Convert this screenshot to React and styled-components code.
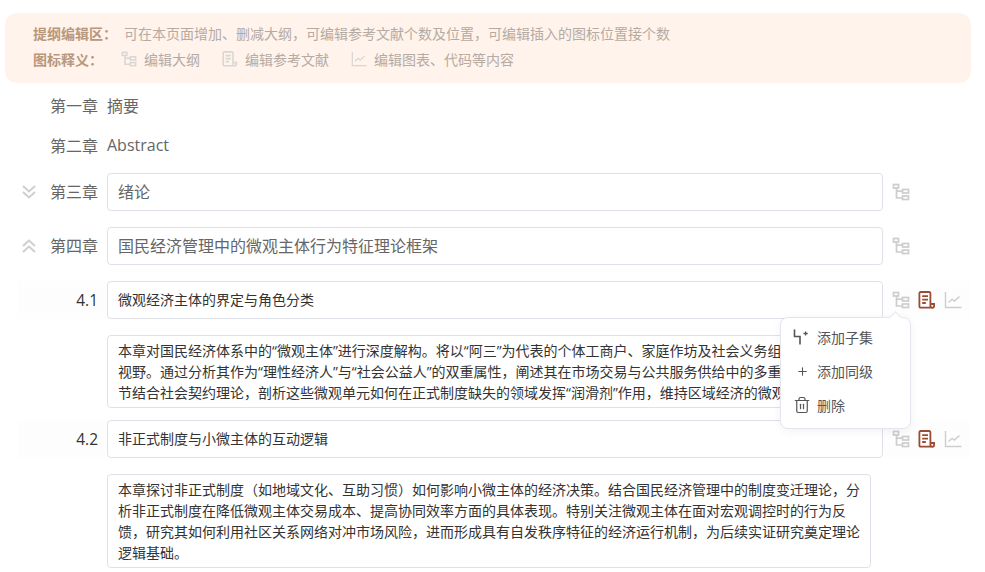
import styled, { createGlobalStyle } from "styled-components";
import { Plus, Trash2 } from "lucide-react";

const GlobalStyle = createGlobalStyle`
  html, body {
    margin: 0;
    padding: 0;
    background: #fff;
    overflow: hidden;
  }
  * {
    box-sizing: border-box;
  }
  body {
    font-family: "Open Sans", "Noto Sans CJK SC", sans-serif;
  }
`;

const TreeIcon = ({ size = 18 }) => (
  <svg width={size} height={size} viewBox="0 0 18 18" fill="none" stroke="currentColor" strokeWidth="1.7">
    <rect x="1.5" y="1.5" width="5" height="3.5" />
    <rect x="10.5" y="6.5" width="6" height="3.5" />
    <rect x="10.5" y="13" width="6" height="3.5" />
    <path d="M4.5 5v10h6M4.5 8.2h6" />
  </svg>
);

const DocIcon = ({ size = 18 }) => (
  <svg width={size} height={size} viewBox="0 0 18 18" fill="none" stroke="currentColor" strokeWidth="1.8">
    <path d="M13 16.6H2.6a1.2 1.2 0 0 1-1.2-1.2V2.2A1.2 1.2 0 0 1 2.6 1h8.6a1.2 1.2 0 0 1 1.2 1.2v12.6a1.8 1.8 0 0 0 3.7.2v-2h-3.7" />
    <path d="M4.2 5.2h5.8M4.2 8.6h5.8M4.2 12h3.6" />
  </svg>
);

const ChartIcon = ({ size = 18 }) => (
  <svg width={size} height={size} viewBox="0 0 18 18" fill="none" stroke="currentColor" strokeWidth="1.4">
    <path d="M1.5 1v15.5h16" />
    <path d="M4.5 11.5l3.5-3.2 2.5 1.8 5-4.6" />
  </svg>
);

const SubsetIcon = () => (
  <svg width="18" height="18" viewBox="0 0 18 18" fill="none" stroke="currentColor" strokeWidth="1.6">
    <path d="M1.5 1.5v7h5.5v8" />
    <path d="M12.6 3.4v4.2M10.5 5.5h4.2" strokeWidth="1.3" />
  </svg>
);

const FoldIcon = ({ up }) => (
  <svg width="16" height="16" viewBox="0 0 16 16" fill="none" stroke="currentColor" strokeWidth="2">
    {up ? (
      <path d="M2 8l6-5.5L14 8M2 14l6-5.5L14 14" />
    ) : (
      <path d="M2 2l6 5.5L14 2M2 8l6 5.5L14 8" />
    )}
  </svg>
);

const Notice = styled.div`
  margin: 13px 0 0 5px;
  width: 966px;
  height: 70px;
  padding: 7px 28px;
  background: #fff3ec;
  border-radius: 12px;
`;

const NoticeLine = styled.div`
  display: flex;
  align-items: center;
  height: 26px;
  font-size: 14px;
  color: #b5aba3;
`;

const NoticeTitle = styled.span`
  font-weight: 700;
  color: #b9977c;
  width: ${(p) => p.$width}px;
  flex: none;
`;

const Legend = styled.span`
  display: inline-flex;
  align-items: center;
  gap: 7px;
  margin-right: 22px;

  svg {
    color: #d9d6d3;
  }
`;

const Outline = styled.div`
  display: flex;
  flex-direction: column;
`;

const Row = styled.div`
  display: flex;
  align-items: center;
  height: 38px;
  margin-top: ${(p) => p.$top || 0}px;
`;

const Fold = styled.div`
  width: 50px;
  flex: none;
  padding-left: 21px;
  color: #cfcfcf;
  display: flex;
`;

const ChapterNo = styled.div`
  width: 57px;
  flex: none;
  padding-bottom: 2px;
  font-size: 16px;
  color: #666;
`;

const SectionNo = styled.div`
  width: 90px;
  margin-left: 17px;
  height: 100%;
  flex: none;
  display: flex;
  align-items: center;
  justify-content: flex-end;
  padding: 0 9px 1px 0;
  font-size: 15.5px;
  color: #333;
  background: repeating-conic-gradient(#fcfcfc 0 25%, #fff 0 50%) 0 0 / 2px 2px;
`;

const PlainTitle = styled.div`
  font-size: 16px;
  padding-bottom: 2px;
  color: #666;
`;

const TitleBox = styled.div`
  width: 776px;
  height: 100%;
  flex: none;
  display: flex;
  align-items: center;
  padding: 0 10px 2px;
  border: 1px solid #dfe1e8;
  border-radius: 4px;
  background: #fff;
  font-size: ${(p) => (p.$small ? 14 : 16)}px;
  color: ${(p) => (p.$small ? "#333" : "#666")};
`;

const Actions = styled.div`
  display: flex;
  align-items: center;
  gap: 8px;
  height: 100%;
  width: 86px;
  margin-left: 1px;
  padding-left: 8px;
  background: ${(p) =>
    p.$hover
      ? "repeating-conic-gradient(#fcfcfc 0 25%, #fff 0 50%) 0 0 / 2px 2px"
      : "transparent"};
`;

const Action = styled.span`
  display: flex;
  color: ${(p) => (p.$active ? "#9c4a33" : "#cdcdcd")};
`;

const Summary = styled.div`
  width: 764px;
  margin: ${(p) => p.$top}px 0 0 107px;
  padding: 4px 10px;
  border: 1px solid #dfe1e8;
  border-radius: 4px;
  font-size: 14px;
  line-height: 21px;
  color: #333;
  white-space: pre-line;
`;

const Menu = styled.div`
  position: absolute;
  left: 780px;
  top: 317px;
  width: 131px;
  height: 112px;
  padding: 4px 0;
  background: #fff;
  border: 1px solid #e4e6ee;
  border-radius: 8px;
  box-shadow: 0 2px 10px rgba(0, 0, 0, 0.06);

  &::before {
    content: "";
    position: absolute;
    top: -5px;
    left: 110px;
    width: 8px;
    height: 8px;
    background: #fff;
    border-left: 1px solid #e4e6ee;
    border-top: 1px solid #e4e6ee;
    transform: rotate(45deg);
  }
`;

const MenuItem = styled.div`
  display: flex;
  align-items: center;
  gap: 6px;
  height: 34px;
  padding: 0 0 4px 12px;
  font-size: 14px;
  color: #555;

  svg {
    flex: none;
    color: #555;
  }
`;

const PlusSlot = styled.span`
  display: flex;
  justify-content: center;
  width: 18px;
  color: #777;
`;

const Page = styled.div`
  position: relative;
  width: 985px;
  height: 572px;
  overflow: hidden;
`;

export default function App() {
  return (
    <Page>
      <GlobalStyle />
      <Notice>
        <NoticeLine>
          <NoticeTitle $width={91}>提纲编辑区：</NoticeTitle>
          可在本页面增加、删减大纲，可编辑参考文献个数及位置，可编辑插入的图标位置接个数
        </NoticeLine>
        <NoticeLine>
          <NoticeTitle $width={88}>图标释义：</NoticeTitle>
          <Legend><TreeIcon size={16} />编辑大纲</Legend>
          <Legend><DocIcon size={16} />编辑参考文献</Legend>
          <Legend><ChartIcon size={16} />编辑图表、代码等内容</Legend>
        </NoticeLine>
      </Notice>
      <Outline>
        <Row $top={4}>
          <Fold />
          <ChapterNo>第一章</ChapterNo>
          <PlainTitle>摘要</PlainTitle>
        </Row>
        <Row $top={2}>
          <Fold />
          <ChapterNo>第二章</ChapterNo>
          <PlainTitle>Abstract</PlainTitle>
        </Row>
        <Row $top={8}>
          <Fold><FoldIcon /></Fold>
          <ChapterNo>第三章</ChapterNo>
          <TitleBox>绪论</TitleBox>
          <Actions><Action><TreeIcon /></Action></Actions>
        </Row>
        <Row $top={16}>
          <Fold><FoldIcon up /></Fold>
          <ChapterNo>第四章</ChapterNo>
          <TitleBox>国民经济管理中的微观主体行为特征理论框架</TitleBox>
          <Actions><Action><TreeIcon /></Action></Actions>
        </Row>
        <Row $top={16}>
          <SectionNo>4.1</SectionNo>
          <TitleBox $small>微观经济主体的界定与角色分类</TitleBox>
          <Actions $hover>
            <Action><TreeIcon /></Action>
            <Action $active><DocIcon /></Action>
            <Action><ChartIcon /></Action>
          </Actions>
        </Row>
        <Summary $top={16}>
          {`本章对国民经济体系中的“微观主体”进行深度解构。将以“阿三”为代表的个体工商户、家庭作坊及社会义务组织纳入
视野。通过分析其作为“理性经济人”与“社会公益人”的双重属性，阐述其在市场交易与公共服务供给中的多重角色。本
节结合社会契约理论，剖析这些微观单元如何在正式制度缺失的领域发挥“润滑剂”作用，维持区域经济的微观秩序。`}
        </Summary>
        <Row $top={12}>
          <SectionNo>4.2</SectionNo>
          <TitleBox $small>非正式制度与小微主体的互动逻辑</TitleBox>
          <Actions $hover>
            <Action><TreeIcon /></Action>
            <Action $active><DocIcon /></Action>
            <Action><ChartIcon /></Action>
          </Actions>
        </Row>
        <Summary $top={16}>
          {`本章探讨非正式制度（如地域文化、互助习惯）如何影响小微主体的经济决策。结合国民经济管理中的制度变迁理论，分
析非正式制度在降低微观主体交易成本、提高协同效率方面的具体表现。特别关注微观主体在面对宏观调控时的行为反
馈，研究其如何利用社区关系网络对冲市场风险，进而形成具有自发秩序特征的经济运行机制，为后续实证研究奠定理论
逻辑基础。`}
        </Summary>
      </Outline>
      <Menu>
        <MenuItem><SubsetIcon />添加子集</MenuItem>
        <MenuItem><PlusSlot><Plus size={13} /></PlusSlot>添加同级</MenuItem>
        <MenuItem><Trash2 size={18} strokeWidth={1.6} />删除</MenuItem>
      </Menu>
    </Page>
  );
}
